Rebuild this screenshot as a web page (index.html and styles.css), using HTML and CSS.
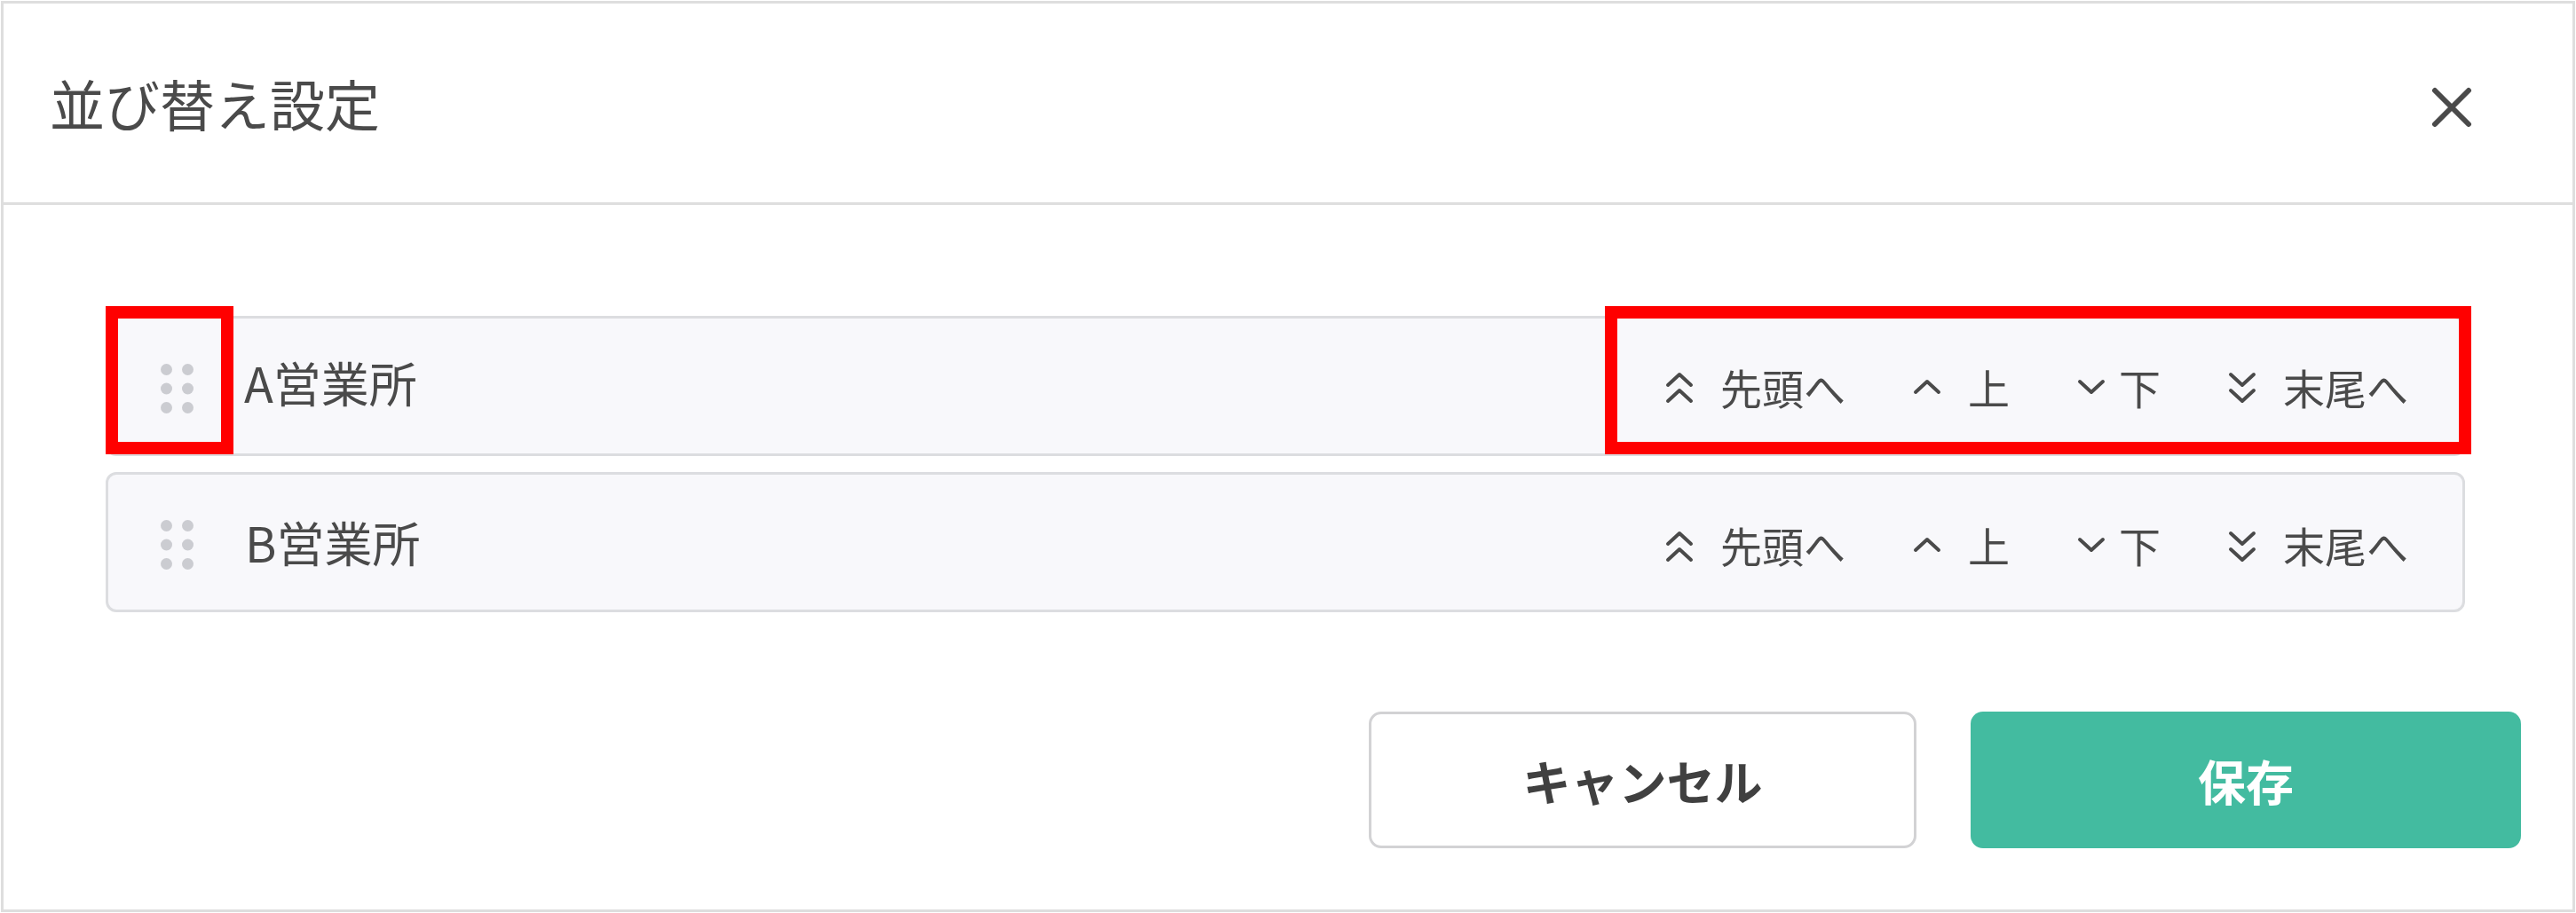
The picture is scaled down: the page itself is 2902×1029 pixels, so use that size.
FILE: index.html
```html
<!DOCTYPE html>
<html>
  <head>
    <meta charset="utf-8" />
    <title>並び替え設定</title>
    <link rel="stylesheet" href="styles.css">
  </head>

  <body>
    <div class="modal">
      <div class="modal-header">
        <h1 class="modal-title">並び替え設定</h1>
        <svg class="close-icon" viewBox="0 0 46 46"><path d="M4 4 L42 42 M42 4 L4 42"/></svg>
      </div>

      <div class="sort-list">
        <div class="sort-row">
          <svg class="grip" viewBox="0 0 38 56">
            <circle cx="6.5" cy="6.5" r="6.5"/><circle cx="30.5" cy="6.5" r="6.5"/>
            <circle cx="6.5" cy="28" r="6.5"/><circle cx="30.5" cy="28" r="6.5"/>
            <circle cx="6.5" cy="49.5" r="6.5"/><circle cx="30.5" cy="49.5" r="6.5"/>
          </svg>
          <span class="sort-name">A営業所</span>
          <div class="sort-actions">
            <span class="sort-btn">
              <svg class="chevron-double" viewBox="0 0 32 36"><path d="M3 15 L16 3 L29 15 M3 33 L16 21 L29 33"/></svg>
              先頭へ
            </span>
            <span class="sort-btn">
              <svg class="chevron" viewBox="0 0 32 18"><path d="M3 15 L16 3 L29 15"/></svg>
              上
            </span>
            <span class="sort-btn sort-btn-tight">
              <svg class="chevron" viewBox="0 0 32 18"><path d="M3 3 L16 15 L29 3"/></svg>
              下
            </span>
            <span class="sort-btn">
              <svg class="chevron-double" viewBox="0 0 32 36"><path d="M3 3 L16 15 L29 3 M3 21 L16 33 L29 21"/></svg>
              末尾へ
            </span>
          </div>
        </div>

        <div class="sort-row sort-row-second">
          <svg class="grip" viewBox="0 0 38 56">
            <circle cx="6.5" cy="6.5" r="6.5"/><circle cx="30.5" cy="6.5" r="6.5"/>
            <circle cx="6.5" cy="28" r="6.5"/><circle cx="30.5" cy="28" r="6.5"/>
            <circle cx="6.5" cy="49.5" r="6.5"/><circle cx="30.5" cy="49.5" r="6.5"/>
          </svg>
          <span class="sort-name">B営業所</span>
          <div class="sort-actions">
            <span class="sort-btn">
              <svg class="chevron-double" viewBox="0 0 32 36"><path d="M3 15 L16 3 L29 15 M3 33 L16 21 L29 33"/></svg>
              先頭へ
            </span>
            <span class="sort-btn">
              <svg class="chevron" viewBox="0 0 32 18"><path d="M3 15 L16 3 L29 15"/></svg>
              上
            </span>
            <span class="sort-btn sort-btn-tight">
              <svg class="chevron" viewBox="0 0 32 18"><path d="M3 3 L16 15 L29 3"/></svg>
              下
            </span>
            <span class="sort-btn">
              <svg class="chevron-double" viewBox="0 0 32 36"><path d="M3 3 L16 15 L29 3 M3 21 L16 33 L29 21"/></svg>
              末尾へ
            </span>
          </div>
        </div>
      </div>

      <div class="modal-footer">
        <button class="btn btn-cancel">キャンセル</button>
        <button class="btn btn-save">保存</button>
      </div>
    </div>

    <!-- red annotation boxes drawn over the screenshot -->
    <div class="callout callout-grip"></div>
    <div class="callout callout-actions"></div>
  </body>
</html>
```

FILE: styles.css
```css
html,
body {
  margin: 0;
  padding: 0;
  background: #fff;
}
body {
  width: 2902px;
  height: 1029px;
  overflow: hidden;
  position: relative;
  font-family: "Noto Sans CJK JP", "Noto Sans", sans-serif;
  color: #4a4a4a;
}
.modal {
  box-sizing: border-box;
  margin: 1px;
  width: 2900px;
  height: 1027px;
  border: 3px solid #dedede;
  display: flex;
  flex-direction: column;
  filter: blur(0.7px);
}
.modal-header {
  flex: none;
  height: 224px;
  border-bottom: 3px solid #dedede;
  display: flex;
  align-items: center;
  justify-content: space-between;
  padding: 0 113px 0 52px;
}
.modal-title {
  margin: 0;
  font-size: 62px;
  font-weight: 400;
  line-height: 1;
}
.close-icon {
  width: 46px;
  height: 46px;
  margin-top: 10px;
}
.close-icon path {
  fill: none;
  stroke: #4a4a4a;
  stroke-width: 6;
  stroke-linecap: round;
}

.sort-list {
  margin: 125px 121px 0 115px;
  display: flex;
  flex-direction: column;
  gap: 18px;
}
.sort-row {
  box-sizing: border-box;
  height: 158px;
  background: #f8f8fb;
  border: 3px solid #dcdde0;
  border-radius: 12px;
  display: flex;
  align-items: center;
  padding: 0 61px 0 59px;
}
.grip {
  width: 38px;
  height: 56px;
  margin-top: 6px;
  fill: #cbccd1;
}
.sort-name {
  margin: -8px 0 0 56px;
  font-size: 54px;
  line-height: 1;
}
.sort-row-second .sort-name {
  margin: 0 0 0 57px;
}
.sort-actions {
  margin-left: auto;
  display: flex;
  align-items: center;
  gap: 76px;
}
.sort-row-second .sort-actions {
  margin-top: 5px;
}
.sort-btn {
  display: flex;
  align-items: center;
  gap: 30px;
  font-size: 47px;
  line-height: 1;
}
.sort-btn-tight {
  gap: 15px;
}
.chevron,
.chevron-double {
  width: 32px;
  fill: none;
  stroke: #4a4a4a;
  stroke-width: 4;
  stroke-linecap: round;
  stroke-linejoin: round;
}
.chevron {
  height: 18px;
  margin-top: 1px;
}
.chevron-double {
  height: 36px;
  margin-top: 4px;
}

.modal-footer {
  margin-top: 112px;
  padding-right: 58px;
  display: flex;
  justify-content: flex-end;
  gap: 61px;
}
.btn {
  box-sizing: border-box;
  height: 154px;
  border-radius: 14px;
  font-family: inherit;
  font-size: 54px;
  font-weight: 700;
}
.btn-cancel {
  width: 617px;
  background: #fff;
  border: 3px solid #d2d2d4;
  color: #404040;
}
.btn-save {
  width: 620px;
  background: #43bba0;
  border: none;
  color: #fff;
}

.callout {
  position: absolute;
  box-sizing: border-box;
  top: 345px;
  height: 167px;
  border: 14px solid #ff0000;
}
.callout-grip {
  left: 119px;
  width: 144px;
}
.callout-actions {
  left: 1808px;
  width: 976px;
}
```
